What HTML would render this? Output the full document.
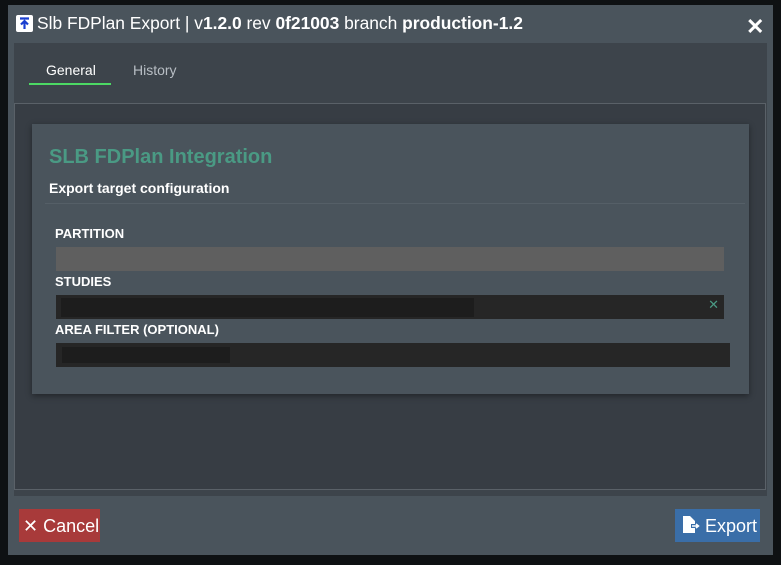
<!DOCTYPE html>
<html><head><meta charset="utf-8"><style>
*{box-sizing:border-box;margin:0;padding:0}
body{width:781px;height:565px;background:#0e1113;font-family:"Liberation Sans",sans-serif;position:relative;overflow:hidden}
.dlg{position:absolute;left:8px;top:5px;width:765px;height:550px;background:#4a545c}
.title{position:absolute;left:8px;top:13px;color:#fff;font-size:17.4px;white-space:nowrap}
.title b{font-weight:bold}
.ico{position:absolute;left:16px;top:15px;width:17px;height:17px;background:#fff;border-radius:2px}
.close{position:absolute;left:746px;top:14px;color:#fff;font-size:22px;font-weight:bold}
.body{position:absolute;left:14px;top:43px;width:753px;height:453px;background:#3d444b}
.tab{position:absolute;top:62px;font-size:14px}
.ul{position:absolute;left:29px;top:83px;width:82px;height:2px;background:#4cd964}
.inner{position:absolute;left:14px;top:103px;width:752px;height:387px;border:1px solid #5a6168;background:#373d44}
.card{position:absolute;left:32px;top:124px;width:717px;height:270px;background:#4a545c;box-shadow:0 2px 6px rgba(0,0,0,.4)}
.h1{position:absolute;left:49px;top:146px;color:#4a9a84;font-size:20px;font-weight:bold}
.h2{position:absolute;left:49px;top:180px;color:#fff;font-size:14px;font-weight:bold}
.hr{position:absolute;left:45px;top:203px;width:700px;height:1px;background:#555f67}
.lab{position:absolute;left:55px;color:#fff;font-size:13px;font-weight:bold}
.in{position:absolute;left:56px;height:24px}
.btn{position:absolute;top:509px;height:33px;color:#fff;font-size:18px;line-height:35px}
</style></head><body>
<div class="dlg"></div>
<div class="ico"><svg width="17" height="17" viewBox="0 0 17 17"><path d="M4 3.5H13M8.5 14V6M5 9.5L8.5 6L12 9.5" stroke="#1a3fd0" stroke-width="2.2" fill="none"/></svg></div>
<div class="title" style="left:37px">Slb FDPlan Export | v<b>1.2.0</b> rev <b>0f21003</b> branch <b>production-1.2</b></div>
<div class="close">✕</div>
<div class="body"></div>
<div class="tab" style="left:46px;color:#fff">General</div>
<div class="tab" style="left:133px;color:#b8bec4">History</div>
<div class="ul"></div>
<div class="inner"></div>
<div class="card"></div>
<div class="h1">SLB FDPlan Integration</div>
<div class="h2">Export target configuration</div>
<div class="hr"></div>
<div class="lab" style="top:226px">PARTITION</div>
<div class="in" style="top:247px;width:668px;background:#5f5f5f"></div>
<div class="lab" style="top:274px">STUDIES</div>
<div class="in" style="top:295px;width:668px;background:#262626"><div style="position:absolute;left:5px;top:3px;width:413px;height:19px;background:#1d1d1d"></div><span style="position:absolute;right:5px;top:2px;color:#4a9a84;font-size:13px">✕</span></div>
<div class="lab" style="top:322px">AREA FILTER (OPTIONAL)</div>
<div class="in" style="top:343px;width:674px;background:#262626"><div style="position:absolute;left:6px;top:4px;width:168px;height:16px;background:#1d1d1d"></div></div>
<div class="btn" style="left:19px;width:81px;background:#a83a3a;padding-left:4px">✕ Cancel</div>
<div class="btn" style="left:675px;width:85px;background:#3a6ea8;padding-left:7px"><svg width="18" height="20" viewBox="0 0 18 20" style="vertical-align:-3px"><path d="M1 1H8L13 6V9H9V13H13V18H1Z" fill="#fff"/><path d="M10 11H16M14 9L16.5 11L14 13" stroke="#fff" stroke-width="1.5" fill="none"/></svg> Export</div>
</body></html>
